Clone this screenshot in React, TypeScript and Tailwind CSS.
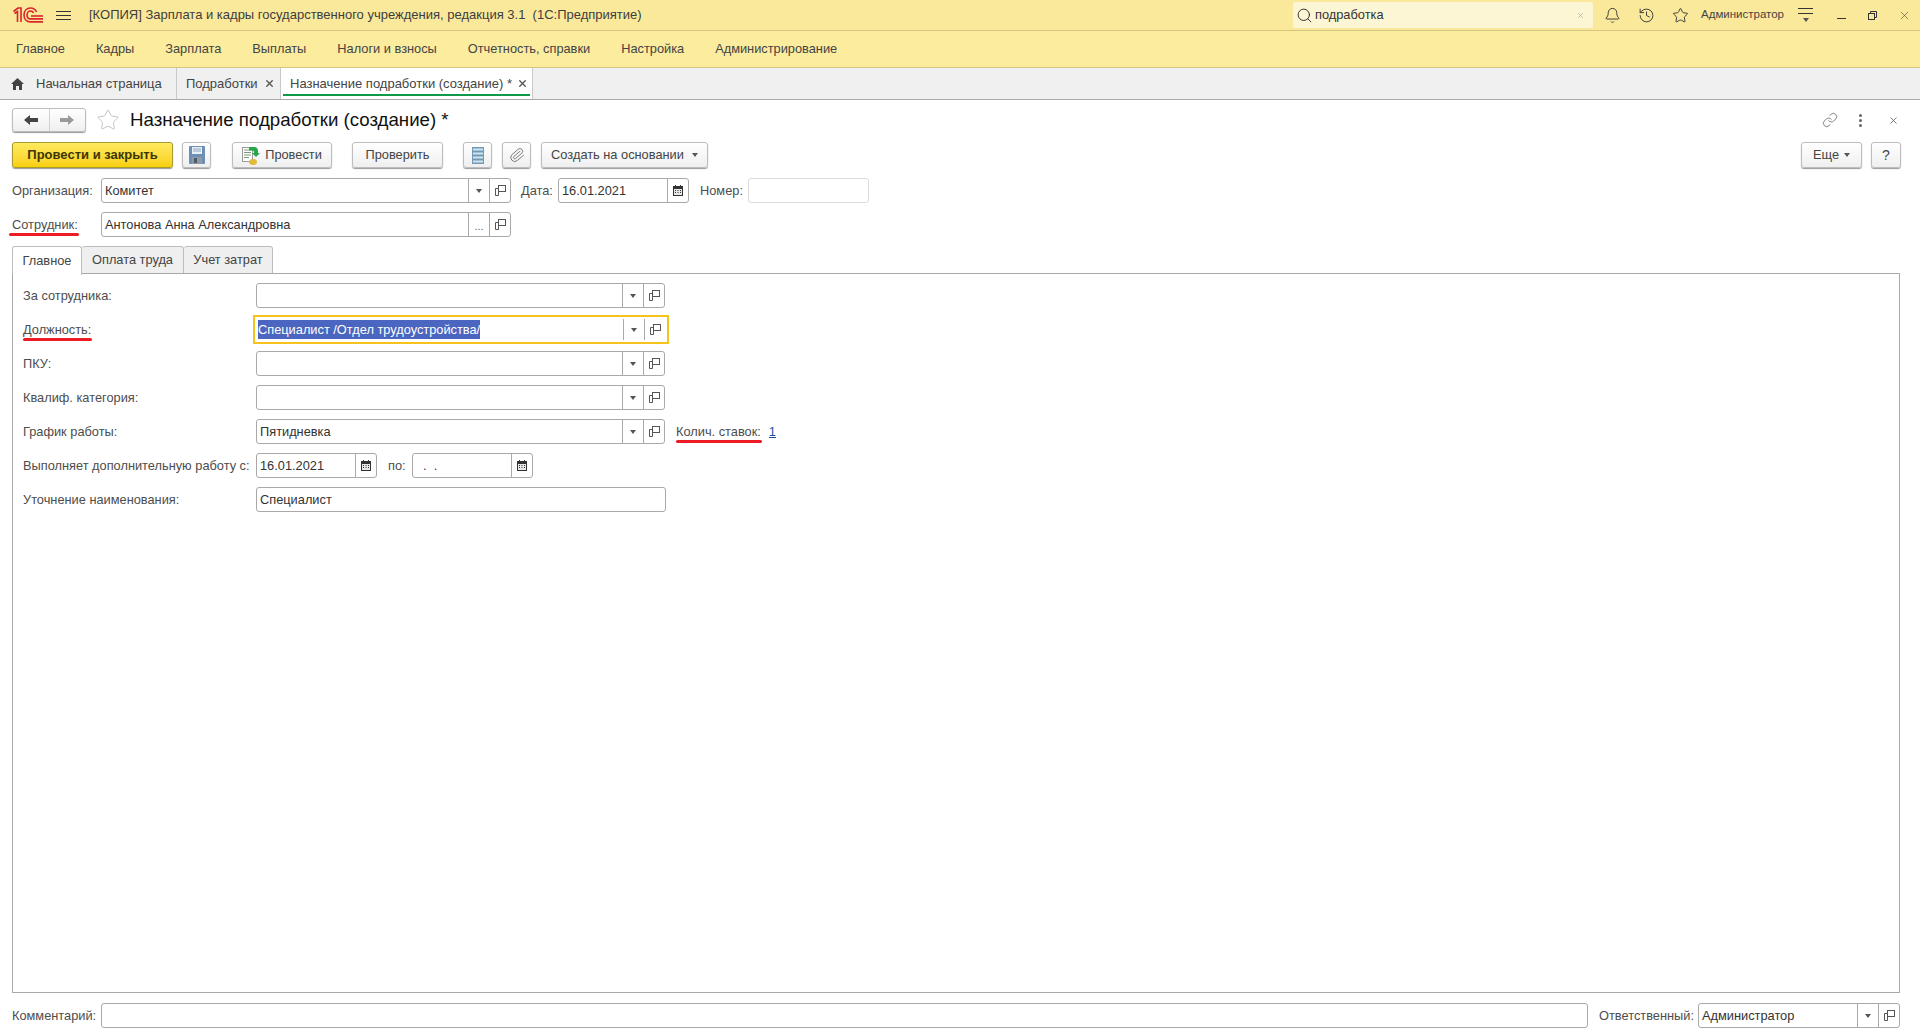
import React from "react";
import { Bell, History, Star, Search, Link, X, Paperclip } from "lucide-react";

const OpenIcon = () => (
  <svg width="11" height="11" viewBox="0 0 11 11" fill="none" stroke="#555" strokeWidth="1">
    <rect x="3.5" y="0.5" width="7" height="6" />
    <path d="M3.5 3.5H0.5V10.5H3.5V6.5" />
  </svg>
);

const CalendarIcon = () => (
  <svg width="10" height="11" viewBox="0 0 10 11">
    <rect x="0.5" y="1.5" width="9" height="9" fill="#e8e8e8" stroke="#333" />
    <rect x="0" y="1" width="10" height="3" fill="#333" />
    <rect x="2" y="0" width="1" height="2" fill="#333" />
    <rect x="7" y="0" width="1" height="2" fill="#333" />
    <path d="M2 5.500h1M4.500 5.500h1M7 5.500h1M2 7.500h1M4.500 7.500h1M7 7.500h1" stroke="#333" />
  </svg>
);

const Caret = () => <span className="w-0 h-0 border-l-[3px] border-r-[3px] border-t-[4px] border-l-transparent border-r-transparent border-t-[#555]" />;

const Logo = () => (
  <svg width="30" height="16" viewBox="0 0 30 16" fill="none" stroke="#d8242b" strokeWidth="1.6">
    <path d="M0.5 4.5L5 1H8V15M4.5 15V4.5L1.5 6.5" />
    <path d="M30 14.9H17.5C13.5 14.9 11 12 11 8C11 4 13.5 1 17.5 1C20.5 1 22.5 2.5 23.5 5" />
    <path d="M30 11.9H17.5C15.5 11.9 14 10.2 14 8C14 5.8 15.5 4 17.5 4C19 4 20 4.8 20.5 6" />
    <path d="M30 9H18" />
  </svg>
);

// обычное поле ввода с кнопками справа
function Field({
  value,
  className = "",
  buttons = [],
}: {
  value?: string;
  className?: string;
  buttons?: string[];
}) {
  return (
    <div className={`h-[25px] flex items-stretch bg-white border border-[#a9a9a9] rounded-[3px] ${className}`}>
      <div className="flex-1 min-w-0 flex items-center pl-[3px] text-[#333] whitespace-nowrap overflow-hidden">
        {value}
      </div>
      {buttons.map((b, i) => (
        <div key={i} className="w-[21px] flex items-center justify-center border-l border-[#a9a9a9]">
          {b === "down" && <Caret />}
          {b === "open" && <OpenIcon />}
          {b === "cal" && <CalendarIcon />}
          {b === "more" && <span className="text-[11px] text-[#666] mt-1">...</span>}
        </div>
      ))}
    </div>
  );
}

function Btn({ children, className = "" }: { children: React.ReactNode; className?: string }) {
  return (
    <div
      className={`h-[26px] flex items-center justify-center gap-[5px] rounded-[3px] border border-[#bdbdbd] bg-gradient-to-b from-white to-[#efefef] shadow-[0_1px_1px_#9a9a9a] text-[#444] whitespace-nowrap ${className}`}
    >
      {children}
    </div>
  );
}

function Underlined({ children, className = "" }: { children: React.ReactNode; className?: string }) {
  return (
    <span className="relative">
      {children}
      <span className={`absolute h-[3px] bg-[#ed1c24] rounded-full ${className}`} />
    </span>
  );
}

function Row({ label, children }: { label: React.ReactNode; children: React.ReactNode }) {
  return (
    <div className="h-[25px] flex items-center">
      <div className="w-[233px] text-[#4d4d4d] whitespace-nowrap">{label}</div>
      {children}
    </div>
  );
}

const menu = [
  "Главное",
  "Кадры",
  "Зарплата",
  "Выплаты",
  "Налоги и взносы",
  "Отчетность, справки",
  "Настройка",
  "Администрирование",
];

export default function App() {
  return (
    <div className="w-[1920px] h-[1035px] flex flex-col overflow-hidden bg-white text-[12.8px] text-[#333] font-['Liberation_Sans',Arial,sans-serif]">
      {/* Заголовок окна */}
      <div className="h-[31px] shrink-0 flex items-center bg-[#fae99b] border-b border-[#d3c57f]">
        <div className="ml-[13px]">
          <Logo />
        </div>
        <div className="ml-[13px] w-[15px] flex flex-col gap-[3px]">
          <div className="h-px bg-[#333]" />
          <div className="h-px bg-[#333]" />
          <div className="h-px bg-[#333]" />
        </div>
        <div className="ml-[18px] text-[13px] text-[#3d3d3d] whitespace-nowrap">
          [КОПИЯ] Зарплата и кадры государственного учреждения, редакция 3.1&nbsp; (1С:Предприятие)
        </div>
        <div className="ml-auto w-[300px] h-[26px] flex items-center bg-[#fdf6d4] rounded-[2px]">
          <Search size={17} strokeWidth={1.4} className="ml-[3px] text-[#333]" />
          <span className="ml-[2px] text-[#333]">подработка</span>
          <X size={9} strokeWidth={1.5} className="ml-auto mr-[8px] text-[#999]" />
        </div>
        <Bell size={17} strokeWidth={1.3} className="ml-[11px] text-[#333]" />
        <History size={17} strokeWidth={1.3} className="ml-[17px] text-[#333]" />
        <Star size={17} strokeWidth={1.3} className="ml-[17px] text-[#333]" />
        <span className="ml-[12px] text-[11.5px] text-[#444]">Администратор</span>
        <div className="ml-[14px] w-[15px] flex flex-col items-center gap-[4px]">
          <div className="h-px w-[15px] bg-[#333]" />
          <div className="h-px w-[15px] bg-[#333]" />
          <Caret />
        </div>
        <div className="ml-[24px] w-[9px] h-px mt-[7px] bg-[#333]" />
        <svg width="9" height="9" viewBox="0 0 9 9" fill="none" stroke="#333" className="ml-[22px]">
          <rect x="0.5" y="2.5" width="6" height="6" />
          <path d="M2.5 2.5V0.5H8.5V6.5H6.5" />
        </svg>
        <X size={13} strokeWidth={1} className="ml-[21px] mr-[9px] text-[#333]" />
      </div>

      {/* Меню разделов */}
      <div className="h-[37px] shrink-0 flex items-center gap-[31px] pl-4 bg-[#fbec9e] border-b border-[#d3c57f] text-[#444]">
        {menu.map((m) => (
          <span key={m} className="whitespace-nowrap">
            {m}
          </span>
        ))}
      </div>

      {/* Открытые вкладки */}
      <div className="h-[32px] shrink-0 flex items-stretch bg-[#f0f0f0] border-b border-[#a8a8a8] text-[13px] text-[#444]">
        <div className="w-[177px] flex items-center border-r border-[#c8c8c8]">
          <svg width="13" height="12" viewBox="0 0 13 12" fill="#444" className="ml-[11px]">
            <path d="M6.5 0L13 6H11V12H8V8H5V12H2V6H0Z" />
          </svg>
          <span className="ml-[12px]">Начальная страница</span>
        </div>
        <div className="w-[104px] flex items-center border-r border-[#c8c8c8]">
          <span className="ml-[9px]">Подработки</span>
          <X size={11} strokeWidth={3} className="ml-[6px] text-[#555]" />
        </div>
        <div className="relative w-[252px] flex items-center bg-white border-r border-[#c8c8c8]">
          <span className="ml-[9px] whitespace-nowrap">Назначение подработки (создание) *</span>
          <X size={11} strokeWidth={3} className="ml-[5px] text-[#555]" />
          <span className="absolute left-[2px] right-[2px] bottom-[3px] h-[2px] bg-[#0f9a4a]" />
        </div>
      </div>

      {/* Форма */}
      <div className="flex-1 min-h-0 flex flex-col pl-3 pr-5 pt-2">
        <div className="h-[24px] shrink-0 flex items-center">
          <div className="w-[74px] h-[24px] flex rounded-[3px] border border-[#bdbdbd] bg-gradient-to-b from-white to-[#efefef] shadow-[0_1px_1px_#9a9a9a]">
            <div className="flex-1 flex items-center justify-center border-r border-[#d0d0d0]">
              <svg width="14" height="10" viewBox="0 0 14 10" fill="#444">
                <path d="M0 5L6 0V3H14V7H6V10Z" />
              </svg>
            </div>
            <div className="flex-1 flex items-center justify-center">
              <svg width="14" height="10" viewBox="0 0 14 10" fill="#9a9a9a">
                <path d="M14 5L8 0V3H0V7H8V10Z" />
              </svg>
            </div>
          </div>
          <Star size={24} strokeWidth={0.8} className="ml-[10px] text-[#b5b5b5]" />
          <span className="ml-[10px] text-[18.67px] text-[#111] whitespace-nowrap">Назначение подработки (создание) *</span>
          <Link size={16} strokeWidth={1.2} className="ml-auto mr-[21px] text-[#666]" />
          <div className="flex flex-col gap-[2px] mr-[26px]">
            <div className="w-[3px] h-[3px] rounded-full bg-[#666]" />
            <div className="w-[3px] h-[3px] rounded-full bg-[#666]" />
            <div className="w-[3px] h-[3px] rounded-full bg-[#666]" />
          </div>
          <X size={11} strokeWidth={1.5} className="mr-[1px] text-[#444]" />
        </div>

        <div className="mt-[10px] h-[26px] shrink-0 flex items-center">
          <div className="w-[161px] h-[26px] flex items-center justify-center rounded-[3px] border border-[#a89a2e] bg-gradient-to-b from-[#ffea5e] to-[#f7d000] shadow-[0_1px_1px_#9a9a9a] text-[13px] font-bold text-[#3d3600]">
            Провести и закрыть
          </div>
          <Btn className="ml-[9px] w-[29px]">
            <svg width="16" height="18" viewBox="0 0 16 18">
              <rect x="0" y="0" width="16" height="18" rx="1" fill="#6d8fb5" />
              <rect x="3" y="1" width="10" height="7" fill="#e9f0f7" />
              <path d="M4 3h8M4 5h8" stroke="#8aa5c2" />
              <rect x="3" y="11" width="10" height="7" fill="#8e9aa6" />
              <rect x="5" y="12" width="3" height="5" fill="#4a5a6a" />
            </svg>
          </Btn>
          <Btn className="ml-[21px] w-[100px]">
            <svg width="18" height="19" viewBox="0 0 18 19">
              <rect x="0.5" y="1.5" width="10" height="14" fill="#fff" stroke="#9a9a9a" />
              <path d="M2 4h7M2 6.500h7M2 9h7M2 11.500h5" stroke="#7a9a7a" />
              <ellipse cx="11" cy="16" rx="4" ry="3" fill="#e3b93a" />
              <path d="M7 1h5c3 0 4 2 4 4v2h2l-4 4-4-4h2V6c0-1-.5-1.500-2-1.500H7Z" fill="#27a64a" />
            </svg>
            <span>Провести</span>
          </Btn>
          <Btn className="ml-[20px] w-[91px]">Проверить</Btn>
          <Btn className="ml-[20px] w-[29px]">
            <svg width="12" height="17" viewBox="0 0 12 17">
              <rect x="0" y="0" width="12" height="17" fill="#6f9ab8" />
              <path d="M1 2.500h10M1 6.500h10M1 10.500h10M1 14.500h10" stroke="#d4e4ef" strokeWidth="2" />
            </svg>
          </Btn>
          <Btn className="ml-[10px] w-[29px]">
            <Paperclip size={16} strokeWidth={1.4} className="text-[#777] rotate-[5deg]" />
          </Btn>
          <Btn className="ml-[10px] w-[167px] gap-[8px]">
            <span>Создать на основании</span>
            <Caret />
          </Btn>
          <Btn className="ml-auto w-[61px]">
            <span>Еще</span>
            <Caret />
          </Btn>
          <Btn className="ml-[9px] mr-[-1px] w-[30px] text-[14px] text-[#222]">?</Btn>
        </div>

        <div className="mt-[10px] h-[25px] shrink-0 flex items-center">
          <span className="w-[89px] text-[#4d4d4d]">Организация:</span>
          <Field value="Комитет" buttons={["down", "open"]} className="w-[410px]" />
          <span className="ml-[10px] w-[37px] text-[#4d4d4d]">Дата:</span>
          <Field value="16.01.2021" buttons={["cal"]} className="w-[131px]" />
          <span className="ml-[11px] w-[48px] text-[#4d4d4d]">Номер:</span>
          <div className="w-[121px] h-[25px] border border-[#dcdcdc] rounded-[3px]" />
        </div>
        <div className="mt-[9px] h-[25px] shrink-0 flex items-center">
          <span className="w-[89px] text-[#4d4d4d]">
            <Underlined className="-left-[3px] -right-[1px] -bottom-[4px]">Сотрудник:</Underlined>
          </span>
          <Field value="Антонова Анна Александровна" buttons={["more", "open"]} className="w-[410px]" />
        </div>

        {/* Вкладки формы */}
        <div className="mt-[9px] h-[28px] shrink-0 flex items-stretch text-[#444]">
          <div className="w-[70px] flex items-center justify-center bg-white border border-b-0 border-[#bdbdbd] rounded-t-[3px] relative z-10 -mb-px">
            Главное
          </div>
          <div className="w-[102px] flex items-center justify-center bg-[#efefef] border border-l-0 border-[#bdbdbd] rounded-t-[3px]">
            Оплата труда
          </div>
          <div className="w-[89px] flex items-center justify-center bg-[#efefef] border border-l-0 border-[#bdbdbd] rounded-t-[3px]">
            Учет затрат
          </div>
        </div>
        <div className="flex-1 min-h-0 mt-[-1px] flex flex-col gap-[9px] pl-[10px] pt-[9px] border border-[#a9a9a9]">
          <Row label="За сотрудника:">
            <Field buttons={["down", "open"]} className="w-[409px]" />
          </Row>
          <Row
            label={
              <Underlined className="left-0 -right-[1px] -bottom-[4px]">Должность:</Underlined>
            }
          >
            <div className="-mx-[3px] p-[2px] border-[2px] border-[#f6c21c]">
              <div className="h-[21px] w-[408px] flex items-stretch bg-white">
                <div className="flex-1 flex items-center pl-[1px]">
                  <span className="bg-[#4a66c0] text-white whitespace-nowrap">Специалист /Отдел трудоустройства/</span>
                </div>
                <div className="w-[21px] flex items-center justify-center border-l border-[#a9a9a9]">
                  <Caret />
                </div>
                <div className="w-[21px] flex items-center justify-center border-l border-[#a9a9a9]">
                  <OpenIcon />
                </div>
              </div>
            </div>
          </Row>
          <Row label="ПКУ:">
            <Field buttons={["down", "open"]} className="w-[409px]" />
          </Row>
          <Row label="Квалиф. категория:">
            <Field buttons={["down", "open"]} className="w-[409px]" />
          </Row>
          <Row label="График работы:">
            <Field value="Пятидневка" buttons={["down", "open"]} className="w-[409px]" />
            <span className="ml-[11px] text-[#4d4d4d] whitespace-nowrap">
              <Underlined className="left-0 -right-[1px] -bottom-[4px]">Колич. ставок:</Underlined>
            </span>
            <span className="ml-[8px] text-[#1a4fa0] underline">1</span>
          </Row>
          <Row label="Выполняет дополнительную работу с:">
            <Field value="16.01.2021" buttons={["cal"]} className="w-[121px]" />
            <span className="ml-[11px] w-[24px] text-[#4d4d4d]">по:</span>
            <Field value="&nbsp;&nbsp;.&nbsp;&nbsp;." buttons={["cal"]} className="w-[121px]" />
          </Row>
          <Row label="Уточнение наименования:">
            <Field value="Специалист" className="w-[410px]" />
          </Row>
        </div>

        <div className="mt-[10px] mb-[7px] h-[25px] shrink-0 flex items-center">
          <span className="w-[89px] text-[#4d4d4d]">Комментарий:</span>
          <Field className="flex-1" />
          <span className="ml-[11px] w-[99px] text-[#4d4d4d]">Ответственный:</span>
          <Field value="Администратор" buttons={["down", "open"]} className="w-[202px]" />
        </div>
      </div>
    </div>
  );
}
